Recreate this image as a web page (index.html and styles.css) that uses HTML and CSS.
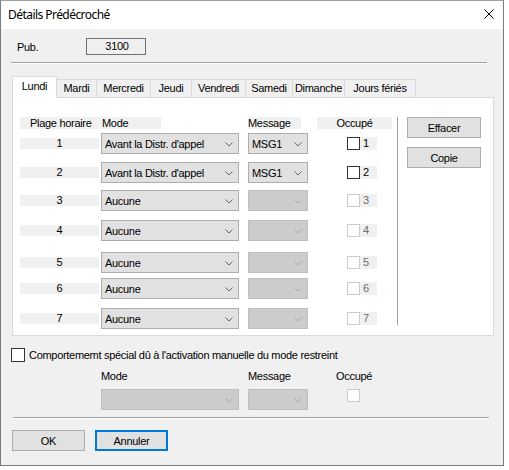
FILE: index.html
```html
<!DOCTYPE html>
<html lang="fr">
<head>
<meta charset="utf-8">
<title>Détails Prédécroché</title>
<link rel="stylesheet" href="styles.css">
</head>
<body>
<div class="window">
  <div class="titlebar">
    <span class="title">Détails Prédécroché</span>
    <svg class="close" width="10" height="10" viewBox="0 0 10 10"><path d="M0.5 0.5 L9.5 9.5 M9.5 0.5 L0.5 9.5" stroke="#000" stroke-width="1" fill="none"/></svg>
  </div>
  <div class="client">
    <div class="pub">
      <span class="pub-label">Pub.</span>
      <span class="pub-box">3100</span>
    </div>
    <div class="hsep top-sep"></div>
    <div class="tabs">
      <div class="tab active w-lundi">Lundi</div>
      <div class="tab w-mardi">Mardi</div>
      <div class="tab w-mercredi">Mercredi</div>
      <div class="tab w-jeudi">Jeudi</div>
      <div class="tab w-vendredi">Vendredi</div>
      <div class="tab w-samedi">Samedi</div>
      <div class="tab w-dimanche">Dimanche</div>
      <div class="tab w-feries">Jours fériés</div>
    </div>
    <div class="panel">
      <div class="table">
        <div class="row head">
          <span class="h-plage">Plage horaire</span>
          <span class="h-mode">Mode</span>
          <span class="h-msg">Message</span>
          <span class="h-occ">Occupé</span>
        </div>
        <div class="row slot r1">
          <span class="num">1</span>
          <div class="combo mode-combo"><span>Avant la Distr. d'appel</span><svg class="chev" width="8" height="5" viewBox="0 0 8 5"><path d="M0.5 0.5 L4 4 L7.5 0.5" stroke="#666" fill="none"/></svg></div>
          <div class="combo msg-combo"><span>MSG1</span><svg class="chev" width="8" height="5" viewBox="0 0 8 5"><path d="M0.5 0.5 L4 4 L7.5 0.5" stroke="#666" fill="none"/></svg></div>
          <div class="occ"><span class="cb"></span><span class="occ-num">1</span></div>
        </div>
        <div class="row slot r2">
          <span class="num">2</span>
          <div class="combo mode-combo"><span>Avant la Distr. d'appel</span><svg class="chev" width="8" height="5" viewBox="0 0 8 5"><path d="M0.5 0.5 L4 4 L7.5 0.5" stroke="#666" fill="none"/></svg></div>
          <div class="combo msg-combo"><span>MSG1</span><svg class="chev" width="8" height="5" viewBox="0 0 8 5"><path d="M0.5 0.5 L4 4 L7.5 0.5" stroke="#666" fill="none"/></svg></div>
          <div class="occ"><span class="cb"></span><span class="occ-num">2</span></div>
        </div>
        <div class="row slot r3">
          <span class="num">3</span>
          <div class="combo mode-combo"><span>Aucune</span><svg class="chev" width="8" height="5" viewBox="0 0 8 5"><path d="M0.5 0.5 L4 4 L7.5 0.5" stroke="#666" fill="none"/></svg></div>
          <div class="combo msg-combo disabled"><span></span><svg class="chev" width="8" height="5" viewBox="0 0 8 5"><path d="M0.5 0.5 L4 4 L7.5 0.5" stroke="#aaa" fill="none"/></svg></div>
          <div class="occ disabled"><span class="cb"></span><span class="occ-num">3</span></div>
        </div>
        <div class="row slot r4">
          <span class="num">4</span>
          <div class="combo mode-combo"><span>Aucune</span><svg class="chev" width="8" height="5" viewBox="0 0 8 5"><path d="M0.5 0.5 L4 4 L7.5 0.5" stroke="#666" fill="none"/></svg></div>
          <div class="combo msg-combo disabled"><span></span><svg class="chev" width="8" height="5" viewBox="0 0 8 5"><path d="M0.5 0.5 L4 4 L7.5 0.5" stroke="#aaa" fill="none"/></svg></div>
          <div class="occ disabled"><span class="cb"></span><span class="occ-num">4</span></div>
        </div>
        <div class="row slot r5">
          <span class="num">5</span>
          <div class="combo mode-combo"><span>Aucune</span><svg class="chev" width="8" height="5" viewBox="0 0 8 5"><path d="M0.5 0.5 L4 4 L7.5 0.5" stroke="#666" fill="none"/></svg></div>
          <div class="combo msg-combo disabled"><span></span><svg class="chev" width="8" height="5" viewBox="0 0 8 5"><path d="M0.5 0.5 L4 4 L7.5 0.5" stroke="#aaa" fill="none"/></svg></div>
          <div class="occ disabled"><span class="cb"></span><span class="occ-num">5</span></div>
        </div>
        <div class="row slot r6">
          <span class="num">6</span>
          <div class="combo mode-combo"><span>Aucune</span><svg class="chev" width="8" height="5" viewBox="0 0 8 5"><path d="M0.5 0.5 L4 4 L7.5 0.5" stroke="#666" fill="none"/></svg></div>
          <div class="combo msg-combo disabled"><span></span><svg class="chev" width="8" height="5" viewBox="0 0 8 5"><path d="M0.5 0.5 L4 4 L7.5 0.5" stroke="#aaa" fill="none"/></svg></div>
          <div class="occ disabled"><span class="cb"></span><span class="occ-num">6</span></div>
        </div>
        <div class="row slot r7">
          <span class="num">7</span>
          <div class="combo mode-combo"><span>Aucune</span><svg class="chev" width="8" height="5" viewBox="0 0 8 5"><path d="M0.5 0.5 L4 4 L7.5 0.5" stroke="#666" fill="none"/></svg></div>
          <div class="combo msg-combo disabled"><span></span><svg class="chev" width="8" height="5" viewBox="0 0 8 5"><path d="M0.5 0.5 L4 4 L7.5 0.5" stroke="#aaa" fill="none"/></svg></div>
          <div class="occ disabled"><span class="cb"></span><span class="occ-num">7</span></div>
        </div>
      </div>
      <div class="vsep"></div>
      <div class="side">
        <div class="btn side-btn">Effacer</div>
        <div class="btn side-btn">Copie</div>
      </div>
    </div>
    <div class="special">
      <span class="cb big"></span>
      <span class="special-text">Comportememt spécial dû à l'activation manuelle du mode restreint</span>
    </div>
    <div class="sp-labels">
      <span class="sp-mode">Mode</span>
      <span class="sp-msg">Message</span>
      <span class="sp-occ">Occupé</span>
    </div>
    <div class="sp-controls">
      <div class="combo mode-combo disabled"><span></span><svg class="chev" width="8" height="5" viewBox="0 0 8 5"><path d="M0.5 0.5 L4 4 L7.5 0.5" stroke="#aaa" fill="none"/></svg></div>
      <div class="combo msg-combo disabled"><span></span><svg class="chev" width="8" height="5" viewBox="0 0 8 5"><path d="M0.5 0.5 L4 4 L7.5 0.5" stroke="#aaa" fill="none"/></svg></div>
      <span class="cb sp-cb"></span>
    </div>
    <div class="hsep bottom-sep"></div>
    <div class="actions">
      <div class="btn action-btn">OK</div>
      <div class="btn action-btn default">Annuler</div>
    </div>
  </div>
</div>
</body>
</html>
```

FILE: styles.css
```css
* { box-sizing: border-box; }
html, body { margin: 0; padding: 0; background: #ffffff; }
body {
  font-family: "Liberation Sans", Arial, sans-serif;
  font-size: 11px;
  letter-spacing: -0.3px;
  color: #000;
}
.window {
  width: 504px;
  height: 466px;
  border: 1px solid #7a7a7a;
  border-top-color: #a0a0a0;
  display: flex;
  flex-direction: column;
  background: #f0f0f0;
}
.titlebar {
  height: 28px;
  flex: none;
  background: #fff;
  display: flex;
  align-items: center;
  justify-content: space-between;
  padding: 0 9px 0 7px;
}
.title {
  font-family: "Noto Sans", "Open Sans", sans-serif;
  font-size: 12px;
  letter-spacing: -0.55px;
  color: #000;
  margin-top: -1px;
}
.close { display: block; margin-top: -3px; }
.client {
  flex: 1;
  background: #f0f0f0;
  display: flex;
  flex-direction: column;
  padding-top: 9px;
}
.pub { display: flex; align-items: center; height: 17px; }
.pub-label { width: 85px; padding-left: 16px; }
.pub-box {
  width: 60px;
  height: 17px;
  border: 1px solid #6f6f6f;
  text-align: center;
  line-height: 14px;
  padding-left: 2px;
}
.hsep {
  height: 2px;
  border-top: 1px solid #a0a0a0;
  border-bottom: 1px solid #ffffff;
}
.top-sep { margin: 7px 0 0 10px; width: 476px; }
.tabs {
  display: flex;
  align-items: flex-end;
  margin: 12px 0 0 11px;
  height: 21px;
  position: relative;
  z-index: 1;
}
.tab {
  height: 18px;
  border: 1px solid #d9d9d9;
  border-bottom: none;
  border-left: none;
  background: #f0f0f0;
  text-align: center;
  line-height: 17px;
}
.tab.active {
  height: 22px;
  margin-bottom: -1px;
  background: #fff;
  border-left: 1px solid #d9d9d9;
  line-height: 18px;
  padding-bottom: 3px;
}
.w-lundi { width: 45px; }
.w-mardi { width: 40px; }
.w-mercredi { width: 54px; }
.w-jeudi { width: 41px; }
.w-vendredi { width: 54px; }
.w-samedi { width: 47px; }
.w-dimanche { width: 52px; }
.w-feries { width: 71px; }
.panel {
  margin-left: 11px;
  width: 482px;
  height: 239px;
  background: #fff;
  border: 1px solid #d9d9d9;
  display: flex;
  padding: 19px 11px 0 7px;
}
.table { display: flex; flex-direction: column; width: 372px; }
.row {
  display: grid;
  grid-template-columns: 80px 148px 69px 75px;
}
.head { height: 12px; line-height: 12px; }
.head span { background: #f0f0f0; }
.h-plage { padding-left: 10px; }
.h-mode { width: 61px; padding-left: 2px; }
.h-msg { width: 53px; }
.h-occ { text-align: center; }
.slot { height: 21px; }
.r1 { margin-top: 4px; }
.r2 { margin-top: 8px; }
.r3 { margin-top: 7px; }
.r4 { margin-top: 9px; }
.r5 { margin-top: 11px; }
.r6 { margin-top: 5px; }
.r7 { margin-top: 9px; }
.num {
  background: #f0f0f0;
  height: 11px;
  margin-top: 5px;
  width: 79px;
  text-align: center;
  line-height: 11px;
}
.combo {
  height: 21px;
  background: #e1e1e1;
  border: 1px solid #adadad;
  display: flex;
  align-items: center;
  justify-content: space-between;
  padding: 0 5px 0 3px;
}
.row .mode-combo { margin-left: 1px; width: 138px; }
.row .msg-combo { width: 60px; }
.combo.disabled { background: #cccccc; border-color: #bfbfbf; }
.chev { display: block; margin-top: 1px; }
.occ {
  display: flex;
  align-items: center;
  margin-left: 30px;
  margin-top: 4px;
  height: 13px;
  width: 30px;
  background: #f0f0f0;
}
.cb {
  width: 13px;
  height: 13px;
  border: 1px solid #333;
  background: #fff;
  flex: none;
}
.occ-num { margin-left: 3px; line-height: 13px; }
.occ.disabled .cb { border-color: #cccccc; }
.occ.disabled .occ-num { color: #6d6d6d; }
.vsep {
  width: 1px;
  background: #a0a0a0;
  height: 208px;
  margin-left: 5px;
}
.side {
  display: flex;
  flex-direction: column;
  gap: 9px;
  margin-left: 9px;
}
.btn {
  background: #e1e1e1;
  border: 1px solid #adadad;
  text-align: center;
  display: flex;
  align-items: center;
  justify-content: center;
}
.side-btn { width: 74px; height: 21px; }
.special {
  display: flex;
  align-items: center;
  margin: 12px 0 0 10px;
  height: 14px;
}
.cb.big { width: 14px; height: 14px; }
.special-text { margin-left: 4px; }
.sp-labels {
  display: flex;
  margin-top: 8px;
  height: 13px;
  line-height: 13px;
}
.sp-mode { margin-left: 100px; width: 147px; }
.sp-msg { width: 88px; }
.sp-controls {
  display: flex;
  margin-top: 6px;
  height: 21px;
}
.sp-controls .mode-combo { margin-left: 100px; width: 138px; }
.sp-controls .msg-combo { margin-left: 9px; width: 60px; }
.sp-cb {
  margin-left: 39px;
  border-color: #cccccc;
}
.bottom-sep { margin: 7px 0 0 12px; width: 476px; }
.actions {
  display: flex;
  gap: 10px;
  margin: 11px 0 0 11px;
}
.action-btn { width: 73px; height: 21px; }
.action-btn.default { border: 2px solid #0078d7; }
```
